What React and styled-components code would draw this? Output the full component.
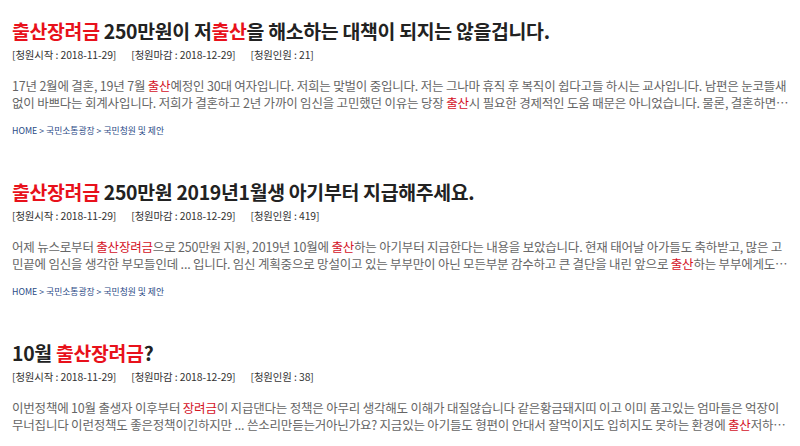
import React from "react";
import styled, { createGlobalStyle } from "styled-components";

const Global = createGlobalStyle`
  html, body { margin: 0; padding: 0; background: #fff; }
  body { font-family: "Noto Sans CJK KR", "Noto Sans", sans-serif; }
`;

const Page = styled.div`
  padding: 18px 0 0 12px;
  display: flex;
  flex-direction: column;
`;

const Item = styled.section`
  display: flex;
  flex-direction: column;
  margin-bottom: 41px;
`;

const Title = styled.h2`
  margin: 0;
  font-size: 19.4px;
  line-height: 26px;
  font-weight: 700;
  color: #222;
  letter-spacing: -0.3px;
  white-space: nowrap;
`;

const Hl = styled.span`
  color: ${(p) => (p.$soft ? "#d4121f" : "#e8111b")};
`;

const Meta = styled.div`
  display: flex;
  gap: 15px;
  margin-top: 3px;
  font-size: 10.4px;
  line-height: 16px;
  letter-spacing: -0.1px;
  color: #333;
`;

const Para = styled.p`
  margin: 14px 0 0;
  font-size: 12.5px;
  line-height: 17px;
  color: #666;
  letter-spacing: -0.2px;
`;

const Line = styled.span`
  display: block;
  white-space: nowrap;
`;

const Crumb = styled.div`
  margin-top: 13px;
  font-size: 8.8px;
  line-height: 14px;
  color: #2a4a86;
`;

const items = [
  {
    title: [<Hl key="a">출산장려금</Hl>, " 250만원이 저", <Hl key="b">출산</Hl>, "을 해소하는 대책이 되지는 않을겁니다."],
    count: 21,
    lines: [
      ["17년 2월에 결혼, 19년 7월 ", <Hl $soft key="a">출산</Hl>, "예정인 30대 여자입니다. 저희는 맞벌이 중입니다. 저는 그나마 휴직 후 복직이 쉽다고들 하시는 교사입니다. 남편은 눈코뜰새"],
      ["없이 바쁘다는 회계사입니다. 저희가 결혼하고 2년 가까이 임신을 고민했던 이유는 당장 ", <Hl $soft key="b">출산</Hl>, "시 필요한 경제적인 도움 때문은 아니었습니다. 물론, 결혼하면…"],
    ],
    crumb: true,
  },
  {
    title: [<Hl key="a">출산장려금</Hl>, " 250만원 2019년1월생 아기부터 지급해주세요."],
    count: 419,
    lines: [
      ["어제 뉴스로부터 ", <Hl $soft key="a">출산장려금</Hl>, "으로 250만원 지원, 2019년 10월에 ", <Hl $soft key="b">출산</Hl>, "하는 아기부터 지급한다는 내용을 보았습니다. 현재 태어날 아가들도 축하받고, 많은 고"],
      ["민끝에 임신을 생각한 부모들인데 ... 입니다. 임신 계획중으로 망설이고 있는 부부만이 아닌 모든부분 감수하고 큰 결단을 내린 앞으로 ", <Hl $soft key="c">출산</Hl>, "하는 부부에게도…"],
    ],
    crumb: true,
  },
  {
    title: ["10월 ", <Hl key="a">출산장려금</Hl>, "?"],
    count: 38,
    lines: [
      ["이번정책에 10월 출생자 이후부터 ", <Hl $soft key="a">장려금</Hl>, "이 지급댄다는 정책은 아무리 생각해도 이해가 대질않습니다 같은황금돼지띠 이고 이미 품고있는 엄마들은 억장이"],
      ["무너집니다 이런정책도 좋은정책이긴하지만 ... 쓴소리만듣는거아닌가요? 지금있는 아기들도 형편이 안대서 잘먹이지도 입히지도 못하는 환경에 ", <Hl $soft key="b">출산</Hl>, "저하…"],
    ],
    crumb: true,
  },
];

export default function App() {
  return (
    <>
      <Global />
      <Page>
        {items.map((it, i) => (
          <Item key={i}>
            <Title>{it.title}</Title>
            <Meta>
              <span>[청원시작 : 2018-11-29]</span>
              <span>[청원마감 : 2018-12-29]</span>
              <span>[청원인원 : {it.count}]</span>
            </Meta>
            <Para>
              {it.lines.map((l, j) => (
                <Line key={j}>{l}</Line>
              ))}
            </Para>
            {it.crumb && <Crumb>HOME &gt; 국민소통광장 &gt; 국민청원 및 제안</Crumb>}
          </Item>
        ))}
      </Page>
    </>
  );
}
